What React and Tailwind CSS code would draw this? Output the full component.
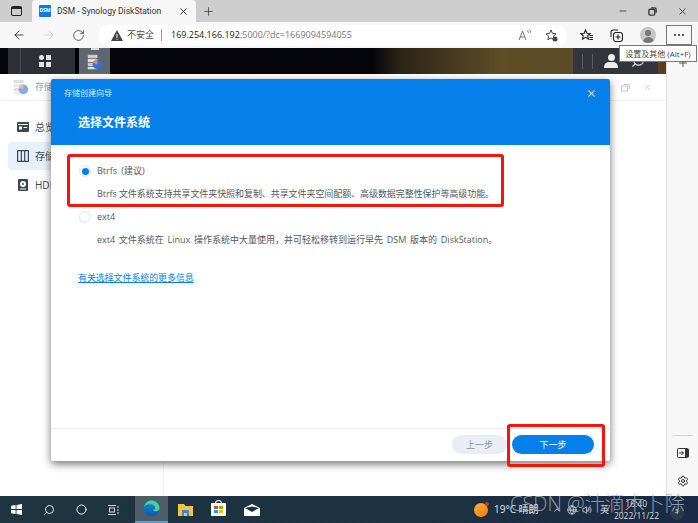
import React from 'react';
import { ArrowLeft, ArrowRight, RotateCw, Plus, X, Minus, Search, Settings, Circle, ChevronUp, Globe, Volume2 } from 'lucide-react';

const cjk = { fontFamily: '"Open Sans", "Noto Sans CJK SC", sans-serif' };

const StorageIcon = ({ className }) => (
  <svg viewBox="0 0 20 20" className={className}>
    <rect x="1" y="1" width="12" height="4" fill="#c9ccd0" />
    <rect x="1" y="6" width="12" height="4" fill="#dcdee1" />
    <rect x="1" y="11" width="12" height="4" fill="#c9ccd0" />
    <rect x="1" y="16" width="12" height="3" fill="#dcdee1" />
    <circle cx="13" cy="13" r="6" fill="#2f74e0" />
    <path d="M13 13V7a6 6 0 0 0-5.600 3.800z" fill="#f08a3c" />
  </svg>
);

const OverviewIcon = () => (
  <svg viewBox="0 0 12 12" className="w-[12px] h-[12px]">
    <rect x="0" y="1" width="12" height="10" rx="1" fill="#3c4650" />
    <rect x="1" y="3" width="10" height="1" fill="#fff" />
    <rect x="2" y="5.500" width="3" height="3" fill="#fff" />
    <rect x="6.500" y="6" width="3.500" height="1" fill="#fff" />
  </svg>
);

const ColumnsIcon = () => (
  <svg viewBox="0 0 12 12" className="w-[12px] h-[12px]" fill="none" stroke="#3c4650" strokeWidth="1.200">
    <rect x="0.600" y="0.600" width="10.800" height="10.800" rx="0.500" />
    <path d="M4.300 1v10M7.700 1v10" />
  </svg>
);

const DiskIcon = () => (
  <svg viewBox="0 0 12 12" className="w-[12px] h-[12px]">
    <rect x="1" y="0" width="10" height="12" rx="1" fill="#3c4650" />
    <circle cx="6" cy="5" r="3" fill="#fff" />
    <circle cx="6" cy="5" r="1" fill="#3c4650" />
    <rect x="3" y="9.500" width="6" height="1" fill="#fff" />
  </svg>
);

const Radio = ({ checked }) => (
  <span className="w-[12px] h-[12px] rounded-full border border-[#dfe5ec] bg-white flex items-center justify-center shrink-0">
    {checked && <span className="w-[7px] h-[7px] rounded-full bg-[#0580ea]" />}
  </span>
);

const SideItem = ({ active, icon, label }) => (
  <div className={`flex items-center gap-[6px] h-[28px] mb-[1px] pl-[9px] rounded-l-[4px] ${active ? 'bg-[#e6f1fb]' : ''}`}>
    {icon}
    <span className="text-[10px] text-[#414b55] whitespace-nowrap">{label}</span>
  </div>
);

const Browser = () => (
  <>
    {/* tab strip */}
    <div className="h-[22px] bg-[#cdcdcd] flex items-end shrink-0">
      <div className="w-[32px] h-[22px] flex items-center justify-center">
        <div className="w-[11px] h-[10px] rounded-[2px] border border-[#222] border-t-[3px]" />
      </div>
      <div className="w-[164px] h-[22px] bg-[#f7f7f7] rounded-t-[4px] flex items-center pl-[7px] pr-[7px]">
        <span className="w-[12px] h-[12px] bg-[#0a7ae6] rounded-[1px] text-white text-[5px] font-bold flex items-center justify-center">DSM</span>
        <span className="ml-[6px] text-[8.500px] text-[#333] whitespace-nowrap flex-1" style={{ fontFamily: 'Roboto, sans-serif' }}>DSM - Synology DiskStation</span>
        <X size={11} className="text-[#222]" />
      </div>
      <div className="w-[24px] h-[22px] flex items-center justify-center">
        <Plus size={13} strokeWidth={1.2} className="text-[#222]" />
      </div>
      <div className="flex-1" />
      <div className="flex items-center h-[22px] gap-[20px] pr-[10px] text-[#333]">
        <Minus size={10} />
        <svg viewBox="0 0 10 10" className="w-[9px] h-[9px]" fill="none" stroke="#333" strokeWidth="1.500">
          <rect x="1" y="2.500" width="6.500" height="6.500" rx="1.500" />
          <path d="M3.500 1h4a1.500 1.500 0 0 1 1.500 1.500v4" />
        </svg>
        <X size={11} />
      </div>
    </div>
    {/* address bar */}
    <div className="h-[26px] bg-[#f7f7f7] flex items-center shrink-0 relative">
      <div className="flex items-center gap-[16px] pl-[12px] w-[98px]">
        <ArrowLeft size={14} strokeWidth={1.4} className="text-[#222]" />
        <ArrowRight size={14} strokeWidth={1.2} className="text-[#c4c4c4]" />
        <RotateCw size={13} strokeWidth={1.4} className="text-[#333]" />
      </div>
      <div className="w-[469px] h-[21px] bg-white rounded-full flex items-center pl-[13px] pr-[9px]">
        <svg viewBox="0 0 12 11" className="w-[12px] h-[11px]">
          <path d="M6 0l6 11H0z" fill="#444" />
          <rect x="5.500" y="4" width="1" height="4" fill="#fff" />
          <rect x="5.500" y="8.800" width="1" height="1" fill="#fff" />
        </svg>
        <span className="ml-[4px] text-[9px] text-[#555]" style={cjk}>不安全</span>
        <span className="w-px h-[12px] bg-[#999] ml-[7px] mr-[9px]" />
        <span className="text-[9px] text-[#222]" style={cjk}>169.254.166.192<span className="text-[#777]">:5000/?dc=1669094594055</span></span>
        <span className="flex-1" />
        <svg viewBox="0 0 13 12" className="w-[13px] h-[12px] mr-[14px]" fill="none" stroke="#666" strokeWidth="0.900">
          <path d="M1 11L4.500 2 8 11M2.200 8h4.600M9 1.500c1 .6 1.500 1.500 1.500 2.500M11 .5c1.200 1 1.800 2.300 1.800 3.500" />
        </svg>
        <svg viewBox="0 0 13 13" className="w-[13px] h-[13px]" fill="none" stroke="#444" strokeWidth="1">
          <path d="M6 1l1.500 3.400 3.500.4-2.600 2.400.7 3.500L6 9l-3.100 1.700.7-3.500L1 4.800l3.500-.4z" />
          <circle cx="10" cy="10" r="2.500" fill="#444" stroke="none" />
        </svg>
      </div>
      <svg viewBox="0 0 13 13" className="w-[13px] h-[13px] ml-[13px]" fill="none" stroke="#222" strokeWidth="1.100">
        <path d="M5.500 1l1.400 3.200 3.300.3-2.500 2.300.8 3.400-3-1.800-3 1.800.7-3.400L.9 4.500l3.300-.3z" />
        <path d="M9.500 6.500H13M9.500 8.500H13M9.500 10.500H13" />
      </svg>
      <svg viewBox="0 0 13 13" className="w-[13px] h-[13px] ml-[17px]" fill="none" stroke="#222" strokeWidth="1.100">
        <path d="M1 8V3a2 2 0 0 1 2-2h5" />
        <rect x="3.500" y="3.500" width="9" height="9" rx="2.500" />
        <path d="M8 5.500v5M5.500 8h5" />
      </svg>
      <span className="w-[16px] h-[16px] ml-[17px] rounded-full bg-[#c6c6c6] overflow-hidden flex flex-col items-center">
        <span className="w-[6px] h-[6px] mt-[3px] rounded-full bg-[#777]" />
        <span className="w-[11px] h-[6px] mt-[1px] rounded-t-full bg-[#777]" />
      </span>
      <span className="w-[26px] h-[20px] ml-[10px] border border-[#777] bg-[#f7f7f7] flex items-center justify-center gap-[2px]">
        <i className="w-[2px] h-[2px] rounded-full bg-[#222]" />
        <i className="w-[2px] h-[2px] rounded-full bg-[#222]" />
        <i className="w-[2px] h-[2px] rounded-full bg-[#222]" />
      </span>
      {/* tooltip */}
      <div className="absolute left-[619px] top-[23px] h-[17px] w-[78px] bg-white border border-[#777] flex items-center justify-center text-[8px] text-[#444] z-20 whitespace-nowrap" style={cjk}>
        设置及其他 (Alt+F)
      </div>
    </div>
  </>
);

const Desktop = () => (
  <div className="h-[26px] flex shrink-0 bg-[linear-gradient(90deg,#04050a_0%,#05060c_56%,#2c2415_60%,#5e4d26_75%,#584a28_96%,#5e3a1c_100%)]">
    <div className="w-[8px]" />
    <div className="w-[67px] bg-[#2d3036] flex items-center">
      <div className="w-[13px] h-full border-r border-[#454950]" />
      <div className="flex-1 flex justify-center pr-[6px]">
        <svg viewBox="0 0 14 14" className="w-[14px] h-[14px]">
          <rect x="1" y="1" width="5" height="5" rx="2.500" fill="#e4e4e4" />
          <rect x="8" y="1" width="5" height="5" fill="#e4e4e4" />
          <rect x="1" y="8" width="5" height="5" fill="#e4e4e4" />
          <rect x="8" y="8" width="5" height="5" fill="#e4e4e4" />
        </svg>
      </div>
    </div>
    <div className="w-[31px] ml-[4px] bg-[#60666d] flex flex-col items-center">
      <span className="w-[8px] h-[2px] bg-[#d8d8d8]" />
      <StorageIcon className="w-[16px] h-[16px] mt-[4px]" />
    </div>
    <div className="flex-1" />
    <div className="w-[85px] bg-[#32363c] flex items-center pl-[9px] mr-[8px]">
      <span className="w-px h-[15px] bg-[#5a5e64]" />
      <span className="w-px h-[15px] bg-[#5a5e64] ml-[9px]" />
      <span className="ml-[11px] flex flex-col items-center">
        <span className="w-[7px] h-[7px] rounded-full bg-[#eee]" />
        <span className="w-[14px] h-[6px] mt-[1px] rounded-t-[5px] bg-[#eee]" />
      </span>
      <Search size={14} className="text-[#ddd] ml-[13px] -scale-x-100" />
    </div>
  </div>
);

const Dialog = () => (
  <div className="absolute left-[51px] top-[5px] w-[559px] h-[382px] bg-white rounded-[2px] shadow-[0_3px_8px_rgba(0,0,0,0.55)] flex flex-col z-10" style={cjk}>
    <div className="h-[66px] bg-[#0580ea] rounded-t-[2px] text-white shrink-0 relative pl-[27px]">
      <div className="absolute left-[13px] top-[8px] text-[8px] text-[#d5e9fb]">存储创建向导</div>
      <X size={11} strokeWidth={2.2} className="absolute right-[13px] top-[9px]" />
      <div className="pt-[36px] text-[12px] font-bold leading-[16px]">选择文件系统</div>
    </div>
    <div className="flex-1 relative pl-[27px] text-[#505a64]">
      <div className="flex items-center gap-[6px] mt-[19px] h-[14px] text-[9px] pl-[1px]">
        <Radio checked />
        <span className="[word-spacing:2px]">Btrfs (建议)</span>
      </div>
      <div className="ml-[19px] mt-[9px] text-[9px] leading-[14px] whitespace-nowrap tracking-[-0.070px]">Btrfs 文件系统支持共享文件夹快照和复制、共享文件夹空间配额、高级数据完整性保护等高级功能。</div>
      <div className="flex items-center gap-[6px] mt-[9px] h-[14px] text-[9px] pl-[1px]">
        <Radio />
        <span>ext4</span>
      </div>
      <div className="ml-[19px] mt-[9px] text-[9px] leading-[14px] whitespace-nowrap [word-spacing:1.400px]">ext4 文件系统在 Linux 操作系统中大量使用，并可轻松移转到运行早先 DSM 版本的 DiskStation。</div>
      <a className="block mt-[25px] text-[9px] leading-[12px] text-[#0580ea] underline tracking-[-0.100px]">有关选择文件系统的更多信息</a>
      {/* red annotation */}
      <div className="absolute left-[16px] top-[9px] w-[437px] h-[53px] border-[3px] border-[#f5150b] rounded-[3px]" />
    </div>
    <div className="h-[33px] border-t border-[#e8edf2] flex items-start justify-end gap-[5px] pr-[16px] pt-[6px] shrink-0 relative">
      <div className="w-[55px] h-[19px] rounded-full bg-[#e9eef4] text-[9px] text-[#8a96a3] flex items-center justify-center">上一步</div>
      <div className="w-[82px] h-[19px] rounded-full bg-[#0580ea] text-[9px] text-white flex items-center justify-center">下一步</div>
      <div className="absolute right-[5px] -top-[5px] w-[98px] h-[43px] border-[3px] border-[#f5150b] rounded-[3px]" />
    </div>
  </div>
);

const Dsm = () => (
  <div className="flex-1 relative flex flex-col bg-white min-h-0">
    <div className="h-[27px] border-b border-[#eef1f4] flex items-center pl-[13px] shrink-0 text-[#9aa3ac] relative">
      <StorageIcon className="w-[16px] h-[16px] opacity-60" />
      <span className="ml-[6px] text-[9px]" style={cjk}>存储管理器</span>
      <svg viewBox="0 0 9 9" className="w-[9px] h-[9px] absolute right-[36px] top-[9px]" fill="none" stroke="#c2c7cd">
        <rect x="0.500" y="3" width="6" height="5" />
        <path d="M2.500 1.500h6v4.500" />
      </svg>
      <X size={9} className="absolute right-[14px] top-[9px] text-[#c2c7cd]" />
    </div>
    <div className="pl-[8px] pt-[12px] flex-1" style={cjk}>
      <div className="w-[100px]">
        <SideItem icon={<OverviewIcon />} label="总览" />
        <SideItem active icon={<ColumnsIcon />} label="存储" />
        <SideItem icon={<DiskIcon />} label="HDD/SSD" />
      </div>
    </div>
    <Dialog />
    <div className="absolute left-[163px] bottom-0 w-px h-[34px] bg-[#eef1f4]" />
  </div>
);

const RightRail = () => (
  <div className="w-[32px] bg-[#f7f7f7] border-l border-[#dedede] flex flex-col items-center shrink-0 pt-[9px] pb-[9px]">
    <Plus size={12} className="text-[#555]" />
    <div className="flex-1" />
    <div className="w-[20px] h-px bg-[#d4d4d4] mb-[11px]" />
    <svg viewBox="0 0 12 12" className="w-[12px] h-[12px] mb-[16px]" fill="none" stroke="#333" strokeWidth="1">
      <rect x="0.500" y="1.500" width="11" height="9" rx="1" />
      <path d="M2 6h4M4.500 4L6.500 6 4.500 8" />
      <rect x="8" y="2" width="3" height="8" fill="#333" stroke="none" />
    </svg>
    <Settings size={12} className="text-[#333]" />
  </div>
);

const Taskbar = () => (
  <div className="h-[27px] bg-[linear-gradient(90deg,#1e3441,#1d3240_60%,#1a2a47)] flex items-center shrink-0 relative" style={cjk}>
    <div className="flex items-center h-full pl-[11px]">
      <svg viewBox="0 0 12 12" className="w-[11px] h-[11px]"><path d="M0 2l5-.8V5.500H0zM6 1l6-1v5.500H6zM0 6.500h5v4.300L0 10zM6 6.500h6V12l-6-1z" fill="#fff" /></svg>
      <Search size={12} className="text-[#e5e5e5] ml-[21px] -scale-x-100" />
      <Circle size={11} strokeWidth={2} className="text-white ml-[21px]" />
      <svg viewBox="0 0 11 10" className="w-[11px] h-[10px] ml-[21px]" fill="none" stroke="#d8d8d8">
        <path d="M0 .500h8M0 9.500h8" />
        <rect x="1.500" y="3" width="5" height="4" />
        <path d="M10 1v2M10 4v2M10 7v2" />
      </svg>
    </div>
    <div className="ml-[16px] w-[33px] h-full bg-[#4e5d66] border-b-2 border-[#4aa3e8] flex items-center justify-center">
      <svg viewBox="0 0 18 18" className="w-[17px] h-[17px]">
        <defs>
          <linearGradient id="edgeBlue" x1="0" y1="0" x2="0" y2="1">
            <stop offset="0" stopColor="#1b8fd6" />
            <stop offset="1" stopColor="#0c59a5" />
          </linearGradient>
        </defs>
        <circle cx="9" cy="9" r="8.500" fill="url(#edgeBlue)" />
        <path d="M1 7C2.500 2.500 6 .500 9 .500c4.500 0 8.500 3.500 8.500 8 0 2.500-2 3.500-4 3.500-1.500 0-2.500-.5-3-1.500 2 0 2.500-1 2.500-2 0-2-2-4-5-4C5 4.500 2.500 5 1 7z" fill="#47cf9e" />
      </svg>
    </div>
    <svg viewBox="0 0 15 13" className="w-[15px] h-[13px] ml-[10px]">
      <path d="M0 1h6l1.500 2H15v10H0z" fill="#f5c242" />
      <rect x="4" y="7" width="7" height="6" fill="#2e8bd4" />
      <rect x="6" y="10" width="3" height="3" fill="#f5c242" />
    </svg>
    <span className="ml-[18px] w-[15px] h-[13px] bg-white rounded-[1px] grid grid-cols-2 gap-px p-[3px] relative">
      <span className="absolute left-[4px] -top-[3px] w-[7px] h-[4px] border border-b-0 border-white rounded-t-full" />
      <i className="bg-[#e8452c]" /><i className="bg-[#7fba00]" /><i className="bg-[#00a4ef]" /><i className="bg-[#ffb900]" />
    </span>
    <svg viewBox="0 0 16 12" className="w-[16px] h-[12px] ml-[18px]">
      <path d="M0 4L8 0l8 4v8H0z" fill="#fff" />
      <path d="M1 4l7 4 7-4-7-1.500z" fill="#1d3240" />
    </svg>
    <div className="flex-1" />
    <span className="w-[14px] h-[14px] rounded-full bg-[linear-gradient(135deg,#ffb02e,#ee7c14)] relative">
      <span className="absolute -right-[1px] -top-[1px] w-[4px] h-[4px] rounded-full bg-[#d8341f]" />
    </span>
    <span className="ml-[6px] w-[46px] text-[10px] text-[#e4e4e4] whitespace-nowrap">19°C 晴朗</span>
    <ChevronUp size={10} className="ml-[12px] text-[#dedede]" />
    <Globe size={10} className="ml-[5px] text-[#dedede]" />
    <Volume2 size={10} className="ml-[5px] text-[#dedede]" />
    <span className="ml-[8px] w-[9px] text-[9px] text-[#e4e4e4] leading-[12px]">英</span>
    <div className="ml-[5px] w-[45px] flex flex-col items-end text-[8.500px] leading-[12px] text-[#dedede] whitespace-nowrap">
      <span className="pr-[12px]">16:40</span>
      <span>2022/11/22</span>
    </div>
    <span className="ml-[11px] mr-[14px] w-[14px] h-[14px] rounded-full bg-[#2a3a46] text-[7px] text-white flex items-center justify-center mt-[6px]">1</span>
    {/* CSDN watermark */}
    <span className="absolute left-[510px] top-[-5px] text-[20px] leading-[26px] font-light text-[#b4bcc4c8] whitespace-nowrap pointer-events-none">CSDN @汁滴木卜除</span>
  </div>
);

export default function App() {
  return (
    <div className="w-[698px] h-[523px] flex flex-col overflow-hidden bg-white" style={cjk}>
      <Browser />
      <div className="flex-1 flex min-h-0">
        <div className="flex-1 flex flex-col min-w-0">
          <Desktop />
          <Dsm />
        </div>
        <RightRail />
      </div>
      <Taskbar />
    </div>
  );
}
